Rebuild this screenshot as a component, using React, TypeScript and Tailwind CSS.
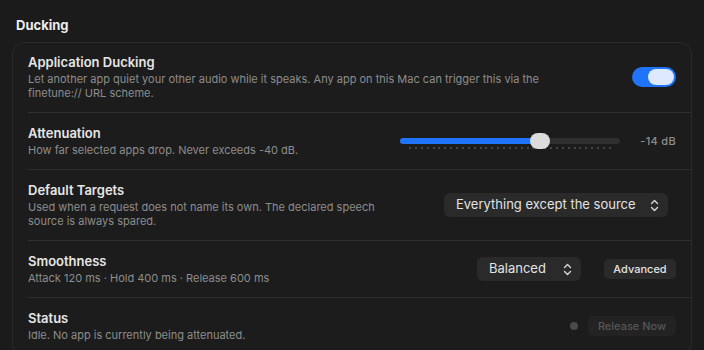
import { useState } from "react";
import clsx from "clsx";

const UpDown = () => (
  <svg width="9" height="13" viewBox="0 0 9 13" fill="none" stroke="#d8d8d8" strokeWidth="1.4" strokeLinecap="round" strokeLinejoin="round">
    <path d="M1.5 4.5 L4.5 1.5 L7.5 4.5" />
    <path d="M1.5 8.5 L4.5 11.5 L7.5 8.5" />
  </svg>
);

const Row = ({ title, desc, first, last, children }: { title: string; desc: React.ReactNode; first?: boolean; last?: boolean; children?: React.ReactNode }) => (
  <div className="pl-[15px]">
    <div className={clsx("flex items-center justify-between pr-[15px] pb-3", first ? "pt-[11px]" : "pt-3", !last && "border-b border-[#2e2e2e]")}>
      <div className="min-w-0">
        <div className="text-[13px] leading-4 font-semibold text-[#e6e6e6]">{title}</div>
        <div className="mt-0.5 text-[11px] leading-[14px] text-[#8d8d8d]">{desc}</div>
      </div>
      <div className="flex items-center shrink-0">{children}</div>
    </div>
  </div>
);

const App = () => {
  const [on, setOn] = useState(true);
  const ticks = Array.from({ length: 35 });

  return (
    <div className="w-[704px] h-[350px] overflow-hidden bg-[#1b1b1b] text-[#e6e6e6]" style={{ fontFamily: "Inter, 'Liberation Sans', sans-serif" }}>
      <h2 className="pl-4 pt-[17px] text-[13px] leading-4 font-bold text-[#ebebeb]">Ducking</h2>
      <div className="mt-[9px] ml-3 w-[680px] rounded-xl border border-[#2a2a2a] bg-[#1c1c1c]">
        <Row
          first
          title="Application Ducking"
          desc={<>Let another app quiet your other audio while it speaks. Any app on this Mac can trigger this via the<br />finetune:// URL scheme.</>}
        >
          <button
            onClick={() => setOn(!on)}
            className={clsx("flex h-5 w-[44px] items-center rounded-full px-[2px]", on ? "justify-end bg-[#1f74f9]" : "justify-start bg-[#3a3a3a]")}
          >
            <span className="h-4 w-[26px] rounded-full bg-[#dde9fd]" />
          </button>
        </Row>
        <Row title="Attenuation" desc="How far selected apps drop. Never exceeds -40 dB.">
          <div className="relative w-[220px] h-4">
            <div className="absolute left-0 right-0 top-[5px] h-[6px] rounded-full bg-[#2f2f2f]" />
            <div className="absolute left-0 top-[5px] h-[6px] w-[140px] rounded-full bg-[#1f74f9]" />
            <div className="absolute left-[9px] right-[9px] top-[14px] flex justify-between">
              {ticks.map((_, i) => (
                <span key={i} className="h-[2px] w-[2px] bg-[#454545]" />
              ))}
            </div>
            <div className="absolute left-[130px] top-0 h-4 w-5 rounded-full bg-[#dcdcdc]" />
          </div>
          <span className="ml-[18px] w-[38px] text-right text-[11px] font-medium tracking-[0.3px] text-[#8d8d8d]">-14 dB</span>
        </Row>
        <Row
          title="Default Targets"
          desc={<>Used when a request does not name its own. The declared speech<br />source is always spared.</>}
        >
          <button className="mr-2 flex h-6 w-[224px] items-center justify-between rounded-md bg-[#2a2a2a] pl-3 pr-[9px] text-[13px] text-[#e2e2e2]">
            <span>Everything except the source</span>
            <UpDown />
          </button>
        </Row>
        <Row title="Smoothness" desc="Attack 120 ms · Hold 400 ms · Release 600 ms">
          <button className="flex h-6 w-[104px] items-center justify-between rounded-md bg-[#2a2a2a] pl-3 pr-[9px] text-[13px] text-[#e2e2e2]">
            <span>Balanced</span>
            <UpDown />
          </button>
          <button className="ml-[23px] h-5 w-[72px] rounded-[5px] bg-[#2a2a2a] text-[11px] font-medium text-[#e2e2e2]">Advanced</button>
        </Row>
        <Row title="Status" desc="Idle. No app is currently being attenuated." last>
          <span className="h-2 w-2 rounded-full bg-[#4a4a4a]" />
          <button disabled className="ml-[10px] h-5 w-[88px] rounded-[5px] bg-[#232323] text-[11px] font-medium text-[#575757]">Release Now</button>
        </Row>
      </div>
    </div>
  );
};

export default App;
